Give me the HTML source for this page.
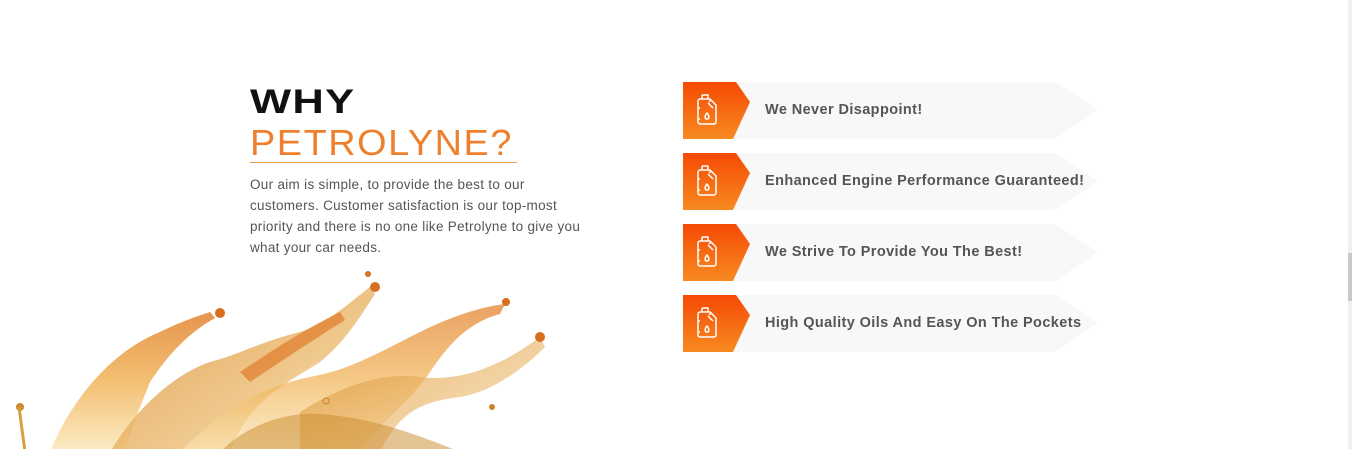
<!DOCTYPE html>
<html><head><meta charset="utf-8"><style>
html,body{margin:0;padding:0;background:#fff;width:1352px;height:449px;overflow:hidden;position:relative;font-family:"Liberation Sans",sans-serif}
.sb{position:absolute;left:1348px;top:0;width:4px;height:449px;background:#efefef}
.sb i{position:absolute;left:0;top:253px;width:4px;height:48px;background:#c8c8c8}
.why{position:absolute;left:250px;top:82px;font-size:34px;font-weight:bold;color:#111;letter-spacing:1px;transform:scaleX(1.28);transform-origin:left top;line-height:40px}
.pet{position:absolute;left:250px;top:123px;font-size:36px;color:#ee7f2d;letter-spacing:1.5px;transform:scaleX(1.05);transform-origin:left top;line-height:40px}
.ul{position:absolute;left:250px;top:162px;width:267px;height:1px;background:#e39a4a}
.p{position:absolute;left:250px;top:174px;width:340px;font-size:13.5px;letter-spacing:.3px;line-height:21px;color:#555}
.row{position:absolute;left:683px;width:420px;height:57px}
.row svg{position:absolute;left:0;top:0}
.row span{position:absolute;left:82px;top:0;line-height:57px;font-size:14.5px;font-weight:bold;color:#555;letter-spacing:.4px}
</style></head><body>
<div class="why">WHY</div>
<div class="pet">PETROLYNE?</div>
<div class="ul"></div>
<div class="p">Our aim is simple, to provide the best to our customers. Customer satisfaction is our top-most priority and there is no one like Petrolyne to give you what your car needs.</div>

<svg width="560" height="190" style="position:absolute;left:0;top:262px" viewBox="0 0 560 190">
<defs>
<linearGradient id="g1" x1="0" y1="0" x2="0" y2="1"><stop offset="0" stop-color="#e07a20"/><stop offset=".5" stop-color="#f0b050"/><stop offset="1" stop-color="#fbe7b8"/></linearGradient>
<linearGradient id="g2" x1="0" y1="0" x2="1" y2="1"><stop offset="0" stop-color="#d88a2a"/><stop offset="1" stop-color="#f9dca0"/></linearGradient>
</defs>
<path d="M50 190 C70 140 110 90 160 70 C180 60 195 55 210 50 L215 56 C190 70 170 90 150 120 C140 145 130 170 125 190Z" fill="url(#g1)" opacity=".8"/>
<path d="M110 190 C140 140 180 110 210 100 C240 92 260 80 300 70 C330 60 350 40 370 25 L375 32 C360 55 345 80 320 100 C290 120 250 135 230 190Z" fill="url(#g2)" opacity=".8"/>
<path d="M180 190 C220 150 260 125 310 115 C350 108 380 90 420 70 C450 55 480 45 505 42 L500 52 C470 60 450 80 430 110 C410 140 380 160 360 190Z" fill="url(#g1)" opacity=".7"/>
<path d="M300 150 C340 125 380 110 420 115 C460 120 500 105 540 75 L545 85 C520 110 490 130 460 135 C420 140 400 150 380 190 L300 190Z" fill="url(#g2)" opacity=".65"/>
<path d="M220 190 C250 160 290 150 320 152 C360 155 400 165 460 190Z" fill="#c98a2a" opacity=".5"/>
<path d="M240 110 C270 90 300 70 340 50 L345 58 C310 80 280 100 250 120Z" fill="#e08030" opacity=".75"/>
<circle cx="220" cy="51" r="5" fill="#d6701e"/><circle cx="375" cy="25" r="5" fill="#d6701e"/><circle cx="506" cy="40" r="4" fill="#d6701e"/><circle cx="540" cy="75" r="5" fill="#d6701e"/><circle cx="20" cy="145" r="4" fill="#c88a30"/><circle cx="368" cy="12" r="3" fill="#d6701e"/><circle cx="326" cy="139" r="3" fill="none" stroke="#d0802a"/><circle cx="492" cy="145" r="3" fill="#d0802a"/>
<path d="M19 145 L25 190" stroke="#d8a040" stroke-width="3"/>
</svg>

<svg width="0" height="0" style="position:absolute"><defs><linearGradient id="o" x1="0" y1="0" x2="0" y2="1"><stop offset="0" stop-color="#f64a05"/><stop offset="1" stop-color="#f78a20"/></linearGradient>
<g id="ic" fill="none" stroke="#fff" stroke-width="1.5" stroke-linejoin="round"><path d="M19 13h6v4"/><path d="M19 13v4"/><path d="M17 17h10l6 6v17c0 1-1 2-2 2h-14c-1 0-2-1-2-2v-21c0-1 1-2 2-2z"/><path d="M25 21l5 5"/><path d="M26 20l2-2"/><path d="M24 31c-2.5 3-2.5 6 0 6s2.5-3 0-6z"/><path d="M15 26h2M15 37h2"/></g></defs></svg>

<div class="row" style="top:82px"><svg width="420" height="57"><polygon points="30,0 372,0 415,28 372,57 30,57" fill="#f8f8f8"/><polygon points="0,0 53,0 67,20 50,57 0,57" fill="url(#o)"/><use href="#ic"/></svg><span>We Never Disappoint!</span></div>
<div class="row" style="top:153px"><svg width="420" height="57"><polygon points="30,0 372,0 415,28 372,57 30,57" fill="#f8f8f8"/><polygon points="0,0 53,0 67,20 50,57 0,57" fill="url(#o)"/><use href="#ic"/></svg><span>Enhanced Engine Performance Guaranteed!</span></div>
<div class="row" style="top:224px"><svg width="420" height="57"><polygon points="30,0 372,0 415,28 372,57 30,57" fill="#f8f8f8"/><polygon points="0,0 53,0 67,20 50,57 0,57" fill="url(#o)"/><use href="#ic"/></svg><span>We Strive To Provide You The Best!</span></div>
<div class="row" style="top:295px"><svg width="420" height="57"><polygon points="30,0 372,0 415,28 372,57 30,57" fill="#f8f8f8"/><polygon points="0,0 53,0 67,20 50,57 0,57" fill="url(#o)"/><use href="#ic"/></svg><span>High Quality Oils And Easy On The Pockets</span></div>

<div class="sb"><i></i></div>
</body></html>
